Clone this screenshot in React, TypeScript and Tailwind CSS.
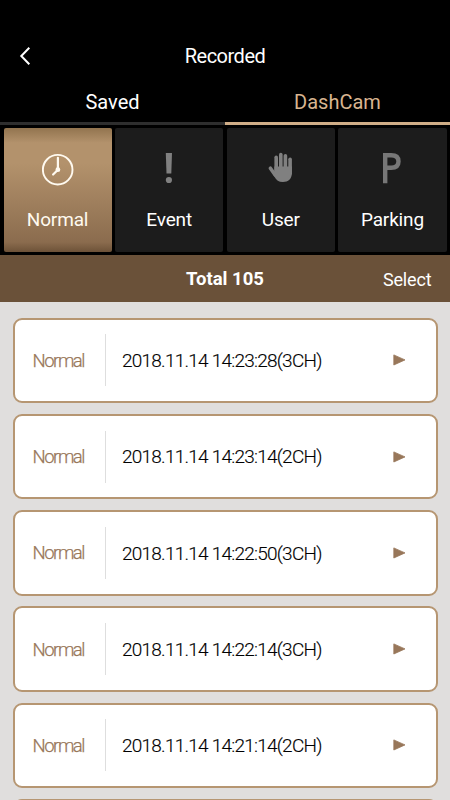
import { type ReactNode } from "react";

type Category = {
    label: string;
    icon: ReactNode;
    active?: boolean;
};

const ClockIcon = () => (
    <svg width="32" height="34" viewBox="0 0 32 34" fill="none">
        <circle cx="15.7" cy="17.7" r="14.8" stroke="#fffaf0" strokeWidth="1.9" />
        <path
            d="M15.9 5.8V17.7l-4.8 4.8"
            stroke="#fffaf0"
            strokeWidth="2.2"
            strokeLinecap="round"
        />
        <circle cx="15.9" cy="17.7" r="2.4" fill="#fffaf0" />
    </svg>
);

const ExclamationIcon = () => (
    <svg width="32" height="34" viewBox="0 0 32 34" fill="#808080">
        <path d="M12.8 1h6.2l-.7 20.5h-4.8z" />
        <circle cx="15.9" cy="28" r="3.1" />
    </svg>
);

const HandIcon = () => (
    <svg width="32" height="34" viewBox="0 0 32 34">
        <g stroke="#808080" strokeWidth="3.6" strokeLinecap="round" fill="none">
            <path d="M11.2 5.2v13" />
            <path d="M15.8 2.6v16" />
            <path d="M20.4 3.8v16" />
            <path d="M25.1 7.2v14" />
            <path d="M5.4 16.2l4.6 6.6" />
        </g>
        <path
            d="M9.4 14.5h17.5v6.5c0 5.8-3.7 9-9 9-4.3 0-6.5-1.8-8.5-5.3l-2-3.7 2-1.8z"
            fill="#808080"
        />
    </svg>
);

const ParkingIcon = () => (
    <svg width="32" height="34" viewBox="0 0 32 34" fill="none">
        <path
            d="M9.2 31.2V3.3h6c5.4 0 7.3 2.2 7.3 6.2s-1.9 6.3-7.3 6.3h-6"
            stroke="#777"
            strokeWidth="4.4"
        />
    </svg>
);

const categories: Category[] = [
    { label: "Normal", icon: <ClockIcon />, active: true },
    { label: "Event", icon: <ExclamationIcon /> },
    { label: "User", icon: <HandIcon /> },
    { label: "Parking", icon: <ParkingIcon /> },
];

const recordings = [
    "2018.11.14 14:23:28(3CH)",
    "2018.11.14 14:23:14(2CH)",
    "2018.11.14 14:22:50(3CH)",
    "2018.11.14 14:22:14(3CH)",
    "2018.11.14 14:21:14(2CH)",
];

const RecordingCard = ({ name }: { name: string }) => (
    <li className="flex h-[85.5px] shrink-0 items-center rounded-[9px] border-2 border-[#b69672] bg-white pl-[18px] pr-[30px]">
        <span className="w-[72px] pt-[3px] text-[18.5px] font-light tracking-[-1.45px] text-[#98775a] [-webkit-text-stroke:0.25px_#98775a]">
            Normal
        </span>
        <span className="h-[52px] w-px bg-[#dedede]" />
        <span className="flex-1 whitespace-nowrap pl-[16.5px] pt-[2px] text-[19px] font-light tracking-[-0.76px] text-black [-webkit-text-stroke:0.15px_black]">
            {name}
        </span>
        <svg width="13" height="12" viewBox="0 0 13 12">
            <path d="M.8.9 12 5.9.8 11z" fill="#98775a" stroke="#98775a" strokeWidth=".8" strokeLinejoin="round" />
        </svg>
    </li>
);

const App = () => {
    return (
        <div className="flex h-[800px] w-[450px] flex-col overflow-hidden bg-black font-[Roboto,sans-serif] text-white">
            <header className="grid h-20 shrink-0 grid-cols-3 items-center pt-8">
                <button className="pl-[19px]" aria-label="Back">
                    <svg width="13" height="20" viewBox="0 0 13 20" fill="none">
                        <path d="M10.3 1.8 2.3 10l8 8.2" stroke="white" strokeWidth="2" />
                    </svg>
                </button>
                <h1 className="text-center text-[20px] tracking-[-0.5px]">Recorded</h1>
            </header>

            <nav className="grid h-[45px] shrink-0 grid-cols-2 text-[20px]">
                <button className="border-b-[3px] border-[#2e2e2e] pt-0.5">Saved</button>
                <button className="border-b-[3px] border-[#cfad87] pt-0.5 text-[#d8b590]">
                    DashCam
                </button>
            </nav>

            <div className="grid h-[130px] shrink-0 grid-cols-4 gap-[3.5px] px-[3.5px] py-[3px]">
                {categories.map((category) => (
                    <button
                        key={category.label}
                        className={`flex flex-col items-center rounded-[2px] pt-6 text-[19px] tracking-[-0.15px] ${
                            category.active
                                ? "bg-[linear-gradient(#92744f_0%,#b3926c_12%,#b3926c_28%,#8b6c4e_92%,#6d5238_100%)] text-[#fffaf0]"
                                : "bg-[#1c1c1c]"
                        }`}
                    >
                        {category.icon}
                        <span className="mt-5">{category.label}</span>
                    </button>
                ))}
            </div>

            <div className="grid h-[47px] shrink-0 grid-cols-3 items-center bg-[#6a5139] pr-[18.5px] pl-[18.5px]">
                <p className="col-start-2 pt-0.5 text-center text-[18.5px] font-bold">Total 105</p>
                <button className="pt-0.5 text-right text-[18px] tracking-[-0.15px]">Select</button>
            </div>

            <ul className="flex flex-1 flex-col gap-[10.75px] overflow-hidden bg-[#e0dedd] px-[12.5px] pt-[15.5px]">
                {recordings.map((name) => (
                    <RecordingCard key={name} name={name} />
                ))}
                {/* top edge of the next card, peeking in at the bottom */}
                <li className="h-4 shrink-0 rounded-t-[9px] border-2 border-b-0 border-[#b69672] bg-white" />
            </ul>
        </div>
    );
};

export default App;
